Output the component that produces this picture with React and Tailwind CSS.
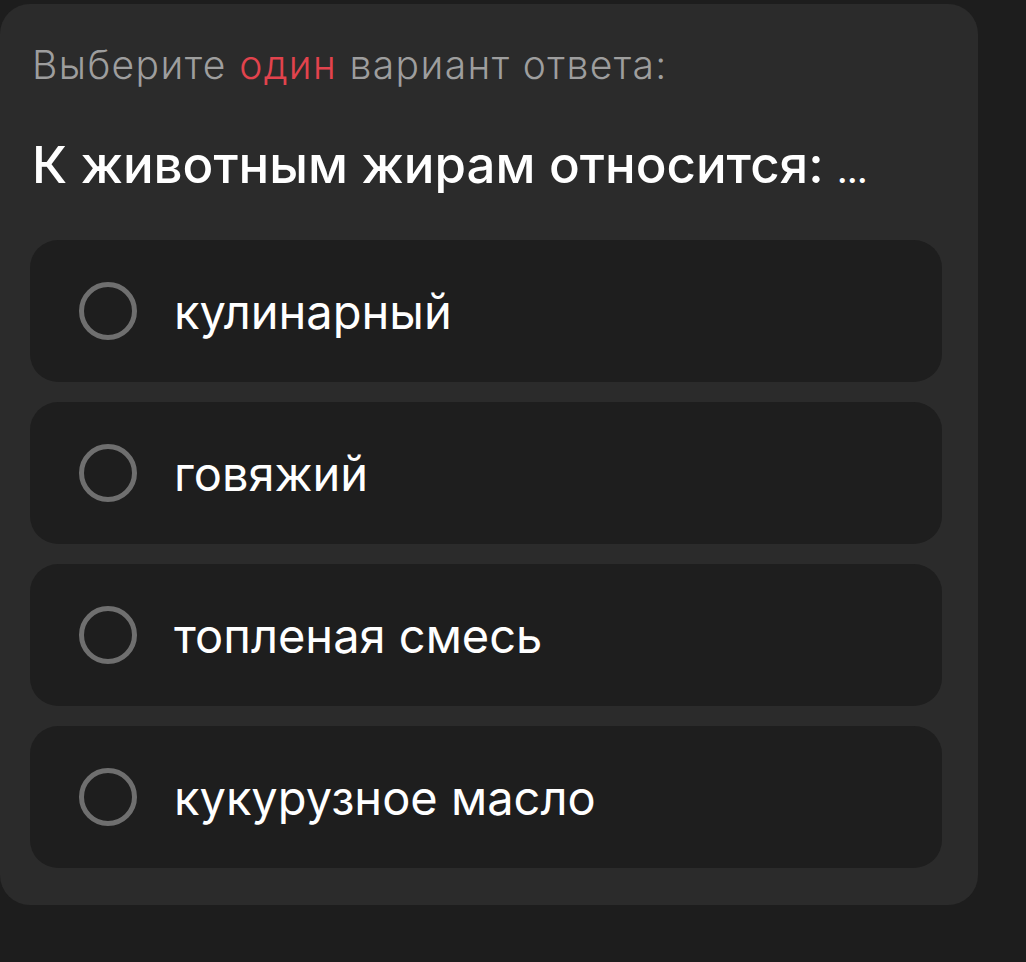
const options = ['кулинарный', 'говяжий', 'топленая смесь', 'кукурузное масло']

function Radio() {
  return <span className="block w-[58px] h-[58px] rounded-full border-[5px] border-[#6f6f6f] shrink-0" />
}

export default function App() {
  return (
    <div
      className="w-[1026px] h-[962px] bg-[#1d1d1d] pt-[4px] overflow-hidden"
      style={{ fontFamily: 'Inter, "Noto Sans", sans-serif' }}
    >
      {/* Question card */}
      <div className="w-[978px] h-[901px] bg-[#2b2b2b] rounded-[30px] pl-[30px] pr-[36px] pt-[37px]">
        <p className="text-[39px] leading-[48px] font-light tracking-[1.4px] text-[#9e9e9e] pl-[2px]">
          Выберите <span className="text-[#e2434d]">один</span> вариант ответа:
        </p>

        <h1 className="mt-[46px] h-[60px] text-[51px] leading-[60px] font-medium text-white pl-[2px]">
          К животным жирам относится: <span className="text-[30px] leading-[0] font-bold">…</span>
        </h1>

        <div className="mt-[45px] flex flex-col gap-[20px]">
          {options.map((o) => (
            <div
              key={o}
              className="h-[142px] bg-[#1e1e1e] rounded-[28px] flex items-center pl-[49px] gap-[37px]"
            >
              <Radio />
              <span className="text-[47px] leading-none text-white">{o}</span>
            </div>
          ))}
        </div>
      </div>
    </div>
  )
}
